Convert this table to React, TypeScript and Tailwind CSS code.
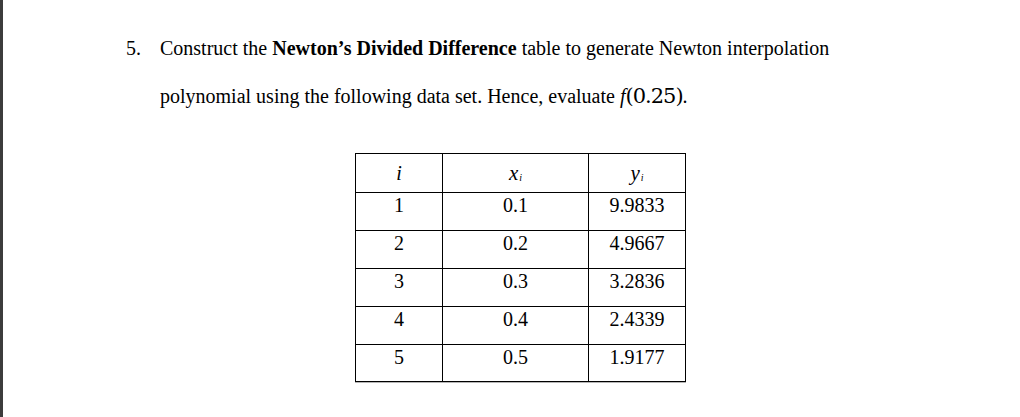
const ROWS = [
  { i: "1", x: "0.1", y: "9.9833" },
  { i: "2", x: "0.2", y: "4.9667" },
  { i: "3", x: "0.3", y: "3.2836" },
  { i: "4", x: "0.4", y: "2.4339" },
  { i: "5", x: "0.5", y: "1.9177" },
];

export default function App() {
  return (
    <div className="flex w-[1020px] h-[417px] bg-white overflow-hidden text-black font-['Liberation_Serif','Times_New_Roman',serif]">
      {/* viewer edge */}
      <div className="w-[3px] shrink-0 bg-[#3c3c3c]" />

      <div className="flex-1 flex flex-col pt-[24px]">
        {/* question */}
        <div className="flex text-[20px] leading-[48px]">
          <div className="w-[157px] shrink-0 pl-[123px]">5.</div>
          <div className="flex flex-col">
            <div>
              Construct the <b>Newton’s Divided Difference</b> table to generate Newton interpolation
            </div>
            <div>
              polynomial using the following data set. Hence, evaluate{" "}
              <span className="italic">f</span>
              <span className="text-[21px] font-['DejaVu_Serif',serif] tracking-[-1px]">(0.25)</span>.
            </div>
          </div>
        </div>

        {/* data table */}
        <div className="ml-[352px] mt-[33px] w-[331px] border border-black text-[20px] leading-[24px] shadow-[0_1px_0_#b5b5b5]">
          <div className="grid grid-cols-[87px_146px_96px] h-[39px] border-b border-black">
            <div className="flex items-center justify-center border-r border-black italic">i</div>
            <div className="flex items-center justify-center border-r border-black italic text-[21px]">
              x<sub className="text-[10px] italic -mb-[5px] ml-[1px]">i</sub>
            </div>
            <div className="flex items-center justify-center italic text-[21px]">
              y<sub className="text-[10px] italic -mb-[5px] ml-[1px]">i</sub>
            </div>
          </div>
          {ROWS.map((r, idx) => {
            const last = idx === ROWS.length - 1;
            return (
              <div
                key={r.i}
                className={`grid grid-cols-[87px_146px_96px] ${last ? "h-[36px]" : "h-[38px] border-b border-black"}`}
              >
                <div className="text-center border-r border-black">{r.i}</div>
                <div className="text-center border-r border-black">{r.x}</div>
                <div className="text-center">{r.y}</div>
              </div>
            );
          })}
        </div>
      </div>
    </div>
  );
}
